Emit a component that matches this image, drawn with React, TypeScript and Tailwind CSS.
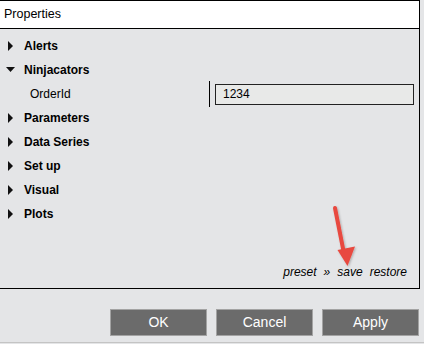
import React from "react";

const Right = () => (
  <svg width="6" height="10" viewBox="0 0 6 10" className="shrink-0">
    <polygon points="0,0 5,5 0,10" fill="#111" />
  </svg>
);
const Down = () => (
  <svg width="10" height="6" viewBox="0 0 10 6" className="shrink-0">
    <polygon points="0,0 9,0 4.5,5" fill="#111" />
  </svg>
);

function Row({ label, open }: { label: string; open?: boolean }) {
  return (
    <div className="flex h-[24px] items-center">
      <div className={open ? "w-[24px] pl-[6px] flex items-center" : "w-[24px] pl-[8px] flex items-center"}>
        {open ? <Down /> : <Right />}
      </div>
      <span className="text-[12px] font-bold text-black">{label}</span>
    </div>
  );
}

export default function App() {
  return (
    <div
      className="relative w-[424px] h-[344px] bg-[#e4e5e7] overflow-hidden"
      style={{ fontFamily: '"Liberation Sans", Arial, sans-serif' }}
    >
      <div className="w-[420px] h-[289px] border-t border-r border-b border-black flex flex-col">
        <div className="h-[28px] bg-white border-b border-black flex items-center pl-[4px] text-[12.5px] text-black shrink-0">
          Properties
        </div>
        <div className="flex-1 flex flex-col pt-[5px]">
          <Row label="Alerts" />
          <Row label="Ninjacators" open />
          <div className="flex h-[24px] items-center">
            <span className="w-[209px] pl-[30px] text-[12px] text-black">OrderId</span>
            <div className="w-px h-[26px] bg-black" />
            <div className="ml-[5px] w-[199px] h-[21px] border border-[#222] bg-[#e8e9e8] flex items-center pl-[7px] text-[12px] text-black">
              1234
            </div>
          </div>
          <Row label="Parameters" />
          <Row label="Data Series" />
          <Row label="Set up" />
          <Row label="Visual" />
          <Row label="Plots" />
          <div className="flex-1" />
          <div className="flex justify-end pr-[12px] pb-[7px] gap-[7px] text-[12px] italic text-black">
            <span>preset</span>
            <span>»</span>
            <span>save</span>
            <span>restore</span>
          </div>
        </div>
      </div>
      <div className="flex justify-end gap-[9px] pr-[5px] pt-[20px]">
        {["OK", "Cancel", "Apply"].map((t) => (
          <div
            key={t}
            className="w-[97px] h-[27px] bg-[#6b6b6b] border border-[#a3a3a3] flex items-center justify-center text-[14px] text-white"
          >
            {t}
          </div>
        ))}
      </div>
      <div className="absolute left-0 right-0 top-[342px] h-px bg-[#c4c4c4]" />
      <svg className="absolute left-0 top-0 pointer-events-none" width="424" height="344">
        <defs>
          <filter id="sh" x="-50%" y="-50%" width="200%" height="200%">
            <feDropShadow dx="1" dy="1" stdDeviation="1" floodColor="#000" floodOpacity="0.25" />
          </filter>
        </defs>
        <g filter="url(#sh)">
          <line x1="335" y1="208" x2="343.5" y2="251" stroke="#e8493f" strokeWidth="4" strokeLinecap="round" />
          <polygon points="337.5,250 355,246.5 347.5,266" fill="#e8493f" />
        </g>
      </svg>
    </div>
  );
}
